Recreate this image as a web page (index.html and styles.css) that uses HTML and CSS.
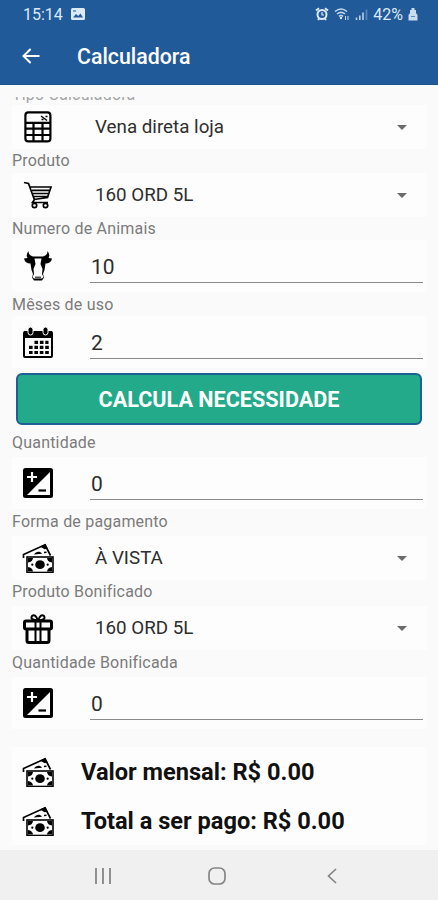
FILE: index.html
```html
<!DOCTYPE html>
<html lang="pt-br">
<head>
	<meta charset="utf-8">
	<title>Calculadora</title>
	<link rel="stylesheet" href="styles.css">
</head>
<body>
	<svg width="0" height="0" class="simbolos">
		<symbol id="exposicao" viewBox="0 0 30 30">
			<rect width="30" height="30" rx="2.5"/>
			<path d="M27 4v23H4z" fill="#fdfdfd"/>
			<path d="M9 4v10M4 9h10" stroke="#fff" stroke-width="2.2"/>
			<path d="M15.5 22.5H23" stroke="#000" stroke-width="2.2"/>
		</symbol>
		<symbol id="dinheiro" viewBox="0 0 32 30">
			<path d="M1.5 15V11.5L23 1.8l5.5 10.7" fill="none" stroke="#000" stroke-width="1.7"/>
			<path d="M18 3.5L23.5 1l2.3 4.5-3.2.8z"/>
			<path d="M12 11.5c2-3.2 6-3.6 8-.8z"/>
			<path d="M22 9.5l2.5-.2" stroke="#000" stroke-width="1.5"/>
			<rect x="5" y="14" width="26" height="15.5" fill="#fdfdfd" stroke="#000" stroke-width="1.6"/>
			<path d="M6 15h5q-.5 4-5 4.5zM30 15h-5q.5 4 5 4.5zM6 28.5h5q-.5-4-5-4.5zM30 28.5h-5q.5-4 5-4.5z"/>
			<ellipse cx="18" cy="21.7" rx="4.8" ry="4.4"/>
			<circle cx="10.3" cy="21.7" r="1.1"/>
			<circle cx="25.7" cy="21.7" r="1.1"/>
		</symbol>
	</svg>

	<div id="estado">
		<span class="hora">15:14</span>
		<svg class="foto" width="14" height="12" viewBox="0 0 14 12"><rect width="14" height="12" rx="1.5" fill="#dce9f7"/><path d="M2 9.5l3-3.5 2.2 2L9.5 5.5 12 9.5z" fill="#215a99"/><path d="M2 3h3" stroke="#215a99"/></svg>
		<div class="sinais">
			<svg width="14" height="14" viewBox="0 0 14 14"><g fill="none" stroke="#dce9f7" stroke-width="2"><circle cx="7" cy="7.5" r="4.5"/><path d="M1 3.5L4 1.2M13 3.5l-3-2.3M3 13l1.5-2M11 13l-1.5-2"/><path d="M7 5v3h2" stroke-width="1.2"/></g></svg>
			<svg width="16" height="14" viewBox="0 0 16 14"><g fill="none" stroke="#c5d9ee" stroke-width="1.5"><path d="M1 4.5q6-5 12 0M3 7q4-3.3 8 0M5 9.3q2-1.6 4 0"/><path d="M11.5 9v4M14 9v4" stroke-width="1"/></g><circle cx="7" cy="11" r="1.2" fill="#dce9f7"/></svg>
			<svg width="13" height="12" viewBox="0 0 13 12"><g stroke="#b9d0e8" stroke-width="1.6"><path d="M1.5 9.5V12M4.8 7.5V12M8 4.5V12"/><path d="M11.5 1.5V12" stroke="#5d89ba"/></g></svg>
			<span>42%</span>
			<svg width="10" height="13" viewBox="0 0 10 13"><path d="M3.5 0h3v2H8v3l1.5 2v5.5h-9V7L2 5V2h1.5z" fill="#c9dcf0"/><path d="M3 8.5h4" stroke="#5d89ba"/></svg>
		</div>
	</div>
	<div id="barra">
		<svg width="18" height="16" viewBox="0 0 18 16"><path d="M17.5 8H1.8M8.6 1L1.5 8l7.1 7" fill="none" stroke="#fff" stroke-width="2"/></svg>
		<h1>Calculadora</h1>
	</div>

	<div id="contenido">
		<label class="primera">Tipo Calculadora</label>
		<div class="fila tipo">
			<svg class="icono" width="28" height="32" viewBox="0 0 28 32"><rect x="1.4" y="1.4" width="25" height="29" rx="3" fill="none" stroke="#000" stroke-width="2.2"/><path d="M2 11.8h24M2 17.7h24M2 24h24M9.5 12v18M18.5 12v18" stroke="#000" stroke-width="2.2"/><path d="M17 5l6 4.5M17.5 8.5h2M21.5 5.5h2" stroke="#000" stroke-width="1.4"/></svg>
			<div class="lista">Vena direta loja<i></i></div>
		</div>
		<label>Produto</label>
		<div class="fila producto">
			<svg class="icono" width="30" height="28" viewBox="0 0 30 28"><g fill="none" stroke="#000" stroke-width="1.7"><path d="M1 1.5l4.5 1L11.5 19M7.5 6H28L24.5 16.5 11 18.5M9 9.3h17M10 12.5h15.5M11 15.5h14M11.5 18.5L9.5 21.5H25"/><circle cx="11.5" cy="24.5" r="2.2"/><circle cx="22.5" cy="24.5" r="2.2"/></g></svg>
			<div class="lista">160 ORD 5L<i></i></div>
		</div>
		<label>Numero de Animais</label>
		<div class="fila animales">
			<svg class="icono" width="28" height="30" viewBox="0 0 28 30"><path d="M4.5 0Q4.500 4.500 9 5.500h10Q23.500 4.500 23.500 0q3 4 1 7L28 7.500q-1 5-6.500 5L20.500 19 19 23l1 3.500-2 3h-8l-2-3L9 23l-1.500-4-1-6.500Q1 12.500 0 7.500L3.500 7Q1.500 4 4.500 0z"/><path d="M10.500 7.500h7L16.500 13l2 5-.5 5 1.500 3-1.500 1.500h-8L8.500 26l1.500-3-.5-5 2-5z" fill="#fdfdfd"/><path d="M11 25.500h6v2h-6z" fill="#555"/></svg>
			<div class="campo">10</div>
		</div>
		<label>Mêses de uso</label>
		<div class="fila meses">
			<svg class="icono" width="30" height="31" viewBox="0 0 30 31"><rect x="1" y="5" width="28" height="25" rx="1" fill="none" stroke="#000" stroke-width="2"/><path d="M1 4h28v7H1z"/><rect x="5" y="0" width="5" height="8" rx="2.5" stroke="#fdfdfd"/><rect x="20" y="0" width="5" height="8" rx="2.5" stroke="#fdfdfd"/><path d="M11.5 15.3h14M6 20.3h20M6 25.5h20" stroke="#000" stroke-width="3.2" stroke-dasharray="3.6 1.8"/></svg>
			<div class="campo">2</div>
		</div>
		<button>CALCULA NECESSIDADE</button>
		<label>Quantidade</label>
		<div class="fila cantidad">
			<svg class="icono" width="30" height="30"><use href="#exposicao"/></svg>
			<div class="campo">0</div>
		</div>
		<label>Forma de pagamento</label>
		<div class="fila pago">
			<svg class="icono" width="32" height="30"><use href="#dinheiro"/></svg>
			<div class="lista">À VISTA<i></i></div>
		</div>
		<label>Produto Bonificado</label>
		<div class="fila regalo">
			<svg class="icono" width="30" height="31" viewBox="0 0 30 31"><g fill="none" stroke="#000"><rect x="1.5" y="8" width="27" height="8" rx="1.5" stroke-width="3"/><path d="M4 16v11.5q0 2 2 2h18q2 0 2-2V16" stroke-width="3"/><path d="M12.5 8v21M17.5 8v21" stroke-width="2"/><path d="M15 7.5Q6.5 7 9 3q3-3 6 4.5Q18 0 21 3q2.5 4-6 4.5" stroke-width="1.9"/></g></svg>
			<div class="lista">160 ORD 5L<i></i></div>
		</div>
		<label>Quantidade Bonificada</label>
		<div class="fila bonificada">
			<svg class="icono" width="30" height="30"><use href="#exposicao"/></svg>
			<div class="campo">0</div>
		</div>
		<div class="fila total">
			<svg class="icono" width="32" height="30"><use href="#dinheiro"/></svg>
			<b>Valor mensal: R$ 0.00</b>
		</div>
		<div class="fila total">
			<svg class="icono" width="32" height="30"><use href="#dinheiro"/></svg>
			<b>Total a ser pago: R$ 0.00</b>
		</div>
	</div>

	<div id="navegacion">
		<svg width="18" height="18" viewBox="0 0 18 18"><path d="M2 1v16M9 1v16M16 1v16" stroke="#858585" stroke-width="1.8"/></svg>
		<svg class="inicio" width="18" height="18" viewBox="0 0 18 18"><rect x="1" y="1" width="16" height="16" rx="5.5" fill="none" stroke="#858585" stroke-width="1.7"/></svg>
		<svg width="10" height="16" viewBox="0 0 10 16"><path d="M9 1L1.5 8 9 15" fill="none" stroke="#858585" stroke-width="1.7"/></svg>
	</div>
</body>
</html>
```
FILE: styles.css
```css
*{box-sizing: border-box;}
body{
	margin: 0;
	height: 900px;
	display: flex;
	flex-direction: column;
	overflow: hidden;
	background-color: #fafafa;
	font-family: Roboto, sans-serif;
}
.simbolos{ position: absolute; }
#estado{
	height: 28px;
	flex: none;
	display: flex;
	align-items: center;
	padding: 0 20px 0 23px;
	background-color: #215a99;
	color: #dce9f7;
	font-size: 16px;
}
.foto{ margin-left: 8px; }
.sinais{
	display: flex;
	align-items: center;
	gap: 5px;
	margin-left: auto;
}
#barra{
	height: 57px;
	flex: none;
	display: flex;
	align-items: center;
	padding-left: 22px;
	background-color: #215a99;
	border-bottom: 1px solid #1c5290;
}
#barra h1{
	margin: 0 0 0 37px;
	color: white;
	font-size: 21.3px;
	font-weight: 500;
}
#contenido{
	height: 753px;
	flex: none;
	overflow: hidden;
	margin-top: 12px;
	padding: 0 11px 0 12px;
}
label{
	display: block;
	height: 18px;
	line-height: 19px;
	color: #7c7c7c;
	font-size: 16px;
	letter-spacing: .2px;
}
.primera{
	margin-top: -13px;
	line-height: 21px;
	color: #a5a5a5;
}
.fila{
	height: 44px;
	display: flex;
	align-items: center;
	background-color: #fdfdfd;
}
.icono{
	width: 32px;
	margin-left: 10px;
	flex: none;
}
.lista{
	flex: 1;
	display: flex;
	align-items: center;
	justify-content: space-between;
	margin-left: 41px;
	padding-right: 20px;
	color: #2e2e2e;
	font-size: 18.8px;
}
.lista i{
	border: 5.5px solid transparent;
	border-top-color: #6b6b6b;
	border-bottom: 0;
}
.campo{
	flex: 1;
	height: 34px;
	line-height: 36px;
	margin: 0 4px 0 36px;
	padding-left: 1px;
	border-bottom: 1px solid #8a8a8a;
	color: #2e2e2e;
	font-size: 21px;
}
.tipo{ margin: 3px 0 2px; }
.producto{ margin: 4px 0 2px; }
.animales{ height: 52px; margin: 3px 0; }
.meses{ height: 52px; margin: 3px 0 5px; }
.cantidad{ height: 52px; margin: 6px 0 3px; }
.pago{ margin: 6px 0 2px; }
.regalo{ margin: 6px 0 3px; }
.bonificada{ height: 52px; margin: 6px 0 18px; }
button{
	display: block;
	width: 406px;
	height: 52px;
	margin: 0 0 8px 4px;
	border: 2px solid #1f5f94;
	border-radius: 6px;
	background-color: #22aa8b;
	color: white;
	font-family: Roboto, sans-serif;
	font-size: 21.6px;
	font-weight: bold;
}
.total{ height: 49px; }
.total b{
	margin-left: 27px;
	color: #111;
	font-size: 23.6px;
}
#navegacion{
	height: 50px;
	flex: none;
	display: flex;
	align-items: center;
	padding: 2px 0 0 94px;
	background-color: #f0f0f0;
}
.inicio{ margin: 0 101px 0 96px; }
```
